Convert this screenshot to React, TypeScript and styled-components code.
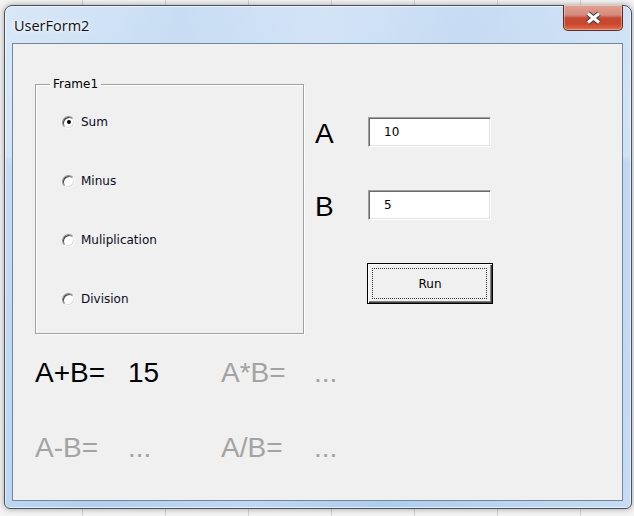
import React from "react";
import styled, { createGlobalStyle } from "styled-components";

const GlobalStyle = createGlobalStyle`
  html, body { margin: 0; padding: 0; }
  body { font-family: "DejaVu Sans", sans-serif; }
`;

const Desktop = styled.div`
  width: 634px;
  height: 516px;
  box-sizing: border-box;
  padding: 5px 2px 7px 4px;
  display: flex;
  background-color: #f4f4f4;
  background-image: repeating-linear-gradient(
    to right,
    transparent 0 82px,
    #d3d3d3 82px 83px
  );
`;

const Window = styled.div`
  flex: 1;
  display: flex;
  flex-direction: column;
  box-sizing: border-box;
  border: 1px solid #47505c;
  border-radius: 8px 8px 6px 6px;
  padding: 0 8px 7px 7px;
  box-shadow: 0 0 6px rgba(0, 0, 0, 0.35), inset 0 0 0 1px rgba(255, 255, 255, 0.6);
  background:
    linear-gradient(
      to bottom,
      rgba(255, 255, 255, 0.3) 0,
      rgba(255, 255, 255, 0.25) 150px,
      rgba(255, 255, 255, 0) 156px
    ),
    linear-gradient(
      100deg,
      #c8def5 0%,
      #b1cfef 25%,
      #c0d8f3 45%,
      #aecdee 65%,
      #c6dcf4 100%
    );
`;

const TitleBar = styled.div`
  height: 37px;
  display: flex;
  align-items: center;
  padding-left: 2px;
`;

const Title = styled.span`
  font-family: "Open Sans", "Noto Sans", sans-serif;
  font-size: 14.5px;
  color: #111;
  text-shadow: 0 0 7px rgba(255, 255, 255, 0.95), 0 0 3px rgba(255, 255, 255, 0.9);
  margin-top: 1px;
`;

const CloseButton = styled.div`
  align-self: flex-start;
  margin: -1px 0 0 auto;
  width: 60px;
  height: 26px;
  box-sizing: border-box;
  border: 1px solid #5e2a22;
  border-top: none;
  border-radius: 0 0 5px 5px;
  display: flex;
  align-items: center;
  justify-content: center;
  background: linear-gradient(
    to bottom,
    #e1a294 0%,
    #d58a7a 40%,
    #c44a36 52%,
    #c9452c 75%,
    #e0704f 100%
  );
  box-shadow: inset 0 0 0 1px rgba(255, 255, 255, 0.35);
`;

const Client = styled.div`
  flex: 1;
  background: #f0f0f0;
  border: 1px solid #76869a;
  padding: 40px 0 0 22px;
  display: flex;
  flex-direction: column;
`;

const TopSection = styled.div`
  display: flex;
  align-items: flex-start;
  gap: 11px;
`;

const FrameBox = styled.div`
  position: relative;
  width: 269px;
  height: 250px;
  box-sizing: border-box;
  border: 1px solid #a0a0a0;
  box-shadow: inset 1px 1px 0 #ffffff, 1px 1px 0 #ffffff;
`;

const Legend = styled.span`
  position: absolute;
  top: -8px;
  left: 14px;
  padding: 0 3px;
  background: #f0f0f0;
  font-size: 12px;
  line-height: 14px;
  color: #000;
`;

const Options = styled.div`
  display: flex;
  flex-direction: column;
  gap: 45px;
  padding: 30px 0 0 26px;
`;

const Option = styled.label`
  display: flex;
  align-items: center;
  gap: 6px;
  height: 14px;
  font-size: 12px;
  color: #0a0a1e;
`;

const Radio = styled.span<{ $checked?: boolean }>`
  position: relative;
  width: 13px;
  height: 13px;
  box-sizing: border-box;
  border-radius: 50%;
  border: 1px solid;
  border-color: #8a8a8a #f8f8f8 #f8f8f8 #8a8a8a;
  background: #ffffff;
  box-shadow: inset 1px 1px 0 #404040, inset -1px -1px 0 #dcdcdc;
  &::after {
    content: "";
    display: ${(p) => (p.$checked ? "block" : "none")};
    position: absolute;
    left: 3.5px;
    top: 3.5px;
    width: 4px;
    height: 4px;
    border-radius: 50%;
    background: #000;
  }
`;

const RightColumn = styled.div`
  display: flex;
  flex-direction: column;
  gap: 43px;
  padding-top: 33px;
`;

const FieldRow = styled.div`
  display: flex;
  align-items: center;
  height: 30px;
`;

const BigLabel = styled.span`
  width: 53px;
  font-family: "Liberation Sans", Arial, sans-serif;
  font-size: 28px;
  line-height: 30px;
  padding-top: 3px;
  color: #000;
`;

const TextBox = styled.div`
  width: 123px;
  height: 30px;
  box-sizing: border-box;
  border: 1px solid;
  border-color: #a0a0a0 #ffffff #ffffff #a0a0a0;
  box-shadow: inset 1px 1px 0 #6a6a6a, inset -1px -1px 0 #e3e3e3;
  background: #ffffff;
  padding-left: 15px;
  display: flex;
  align-items: center;
  font-size: 12px;
  color: #000;
`;

const RunButton = styled.div`
  position: relative;
  margin-left: 52px;
  width: 126px;
  height: 41px;
  box-sizing: border-box;
  border: 1px solid #000;
  background: #f0f0f0;
  box-shadow: inset 1px 1px 0 #ffffff, inset -1px -1px 0 #404040,
    inset -2px -2px 0 #808080;
  display: flex;
  align-items: center;
  justify-content: center;
  font-size: 12px;
  color: #000;
  &::after {
    content: "";
    position: absolute;
    inset: 4px 5px 4px 4px;
    border: 1px dotted #333;
  }
`;

const Results = styled.div`
  display: grid;
  grid-template-columns: repeat(4, 93px);
  row-gap: 43px;
  margin-top: 23px;
`;

const ResultText = styled.span<{ $disabled?: boolean }>`
  font-family: "Liberation Sans", Arial, sans-serif;
  font-size: 28px;
  line-height: 32px;
  color: ${(p) => (p.$disabled ? "#a3a3a3" : "#000")};
`;

const CloseIcon = () => (
  <svg width="17" height="14" viewBox="0 0 17 14">
    <path d="M3 2.5 L14 11.5 M14 2.5 L3 11.5" stroke="#3b3b3b" strokeWidth="5" />
    <path d="M3 2.5 L14 11.5 M14 2.5 L3 11.5" stroke="#ffffff" strokeWidth="3" />
  </svg>
);

const options = [
  { label: "Sum", checked: true },
  { label: "Minus" },
  { label: "Muliplication" },
  { label: "Division" },
];

const results: { text: string; disabled?: boolean }[] = [
  { text: "A+B=" },
  { text: "15" },
  { text: "A*B=", disabled: true },
  { text: "...", disabled: true },
  { text: "A-B=", disabled: true },
  { text: "...", disabled: true },
  { text: "A/B=", disabled: true },
  { text: "...", disabled: true },
];

export default function App() {
  return (
    <>
      <GlobalStyle />
      <Desktop>
        <Window>
          <TitleBar>
            <Title>UserForm2</Title>
            <CloseButton>
              <CloseIcon />
            </CloseButton>
          </TitleBar>
          <Client>
            <TopSection>
              <FrameBox>
                <Legend>Frame1</Legend>
                <Options>
                  {options.map((o) => (
                    <Option key={o.label}>
                      <Radio $checked={o.checked} />
                      {o.label}
                    </Option>
                  ))}
                </Options>
              </FrameBox>
              <RightColumn>
                <FieldRow>
                  <BigLabel>A</BigLabel>
                  <TextBox>10</TextBox>
                </FieldRow>
                <FieldRow>
                  <BigLabel>B</BigLabel>
                  <TextBox>5</TextBox>
                </FieldRow>
                <RunButton>Run</RunButton>
              </RightColumn>
            </TopSection>
            <Results>
              {results.map((r, i) => (
                <ResultText key={i} $disabled={r.disabled}>
                  {r.text}
                </ResultText>
              ))}
            </Results>
          </Client>
        </Window>
      </Desktop>
    </>
  );
}
